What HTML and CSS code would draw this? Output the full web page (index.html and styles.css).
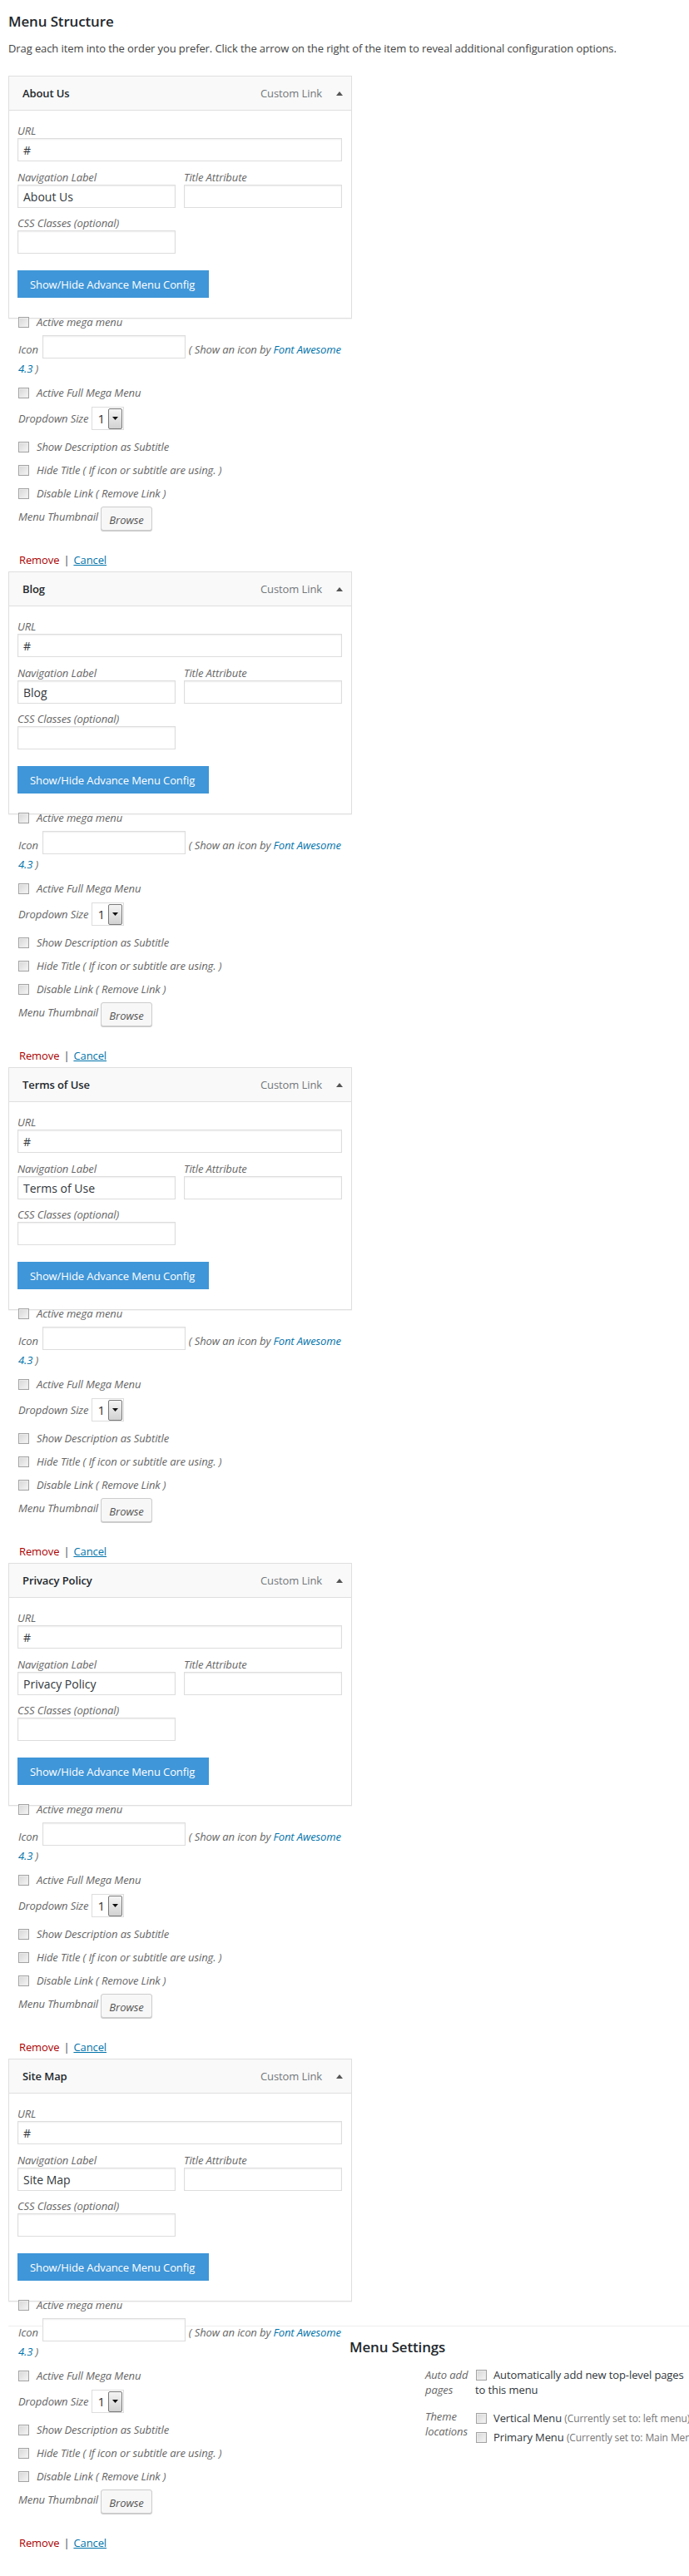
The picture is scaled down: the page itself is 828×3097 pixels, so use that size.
FILE: index.html
```html
<!DOCTYPE html>
<html lang="en">
<head>
<meta charset="utf-8">
<title>Menu Structure</title>
<link rel="stylesheet" href="styles.css">
</head>
<body>
<div class="page">
  <h3 class="page-title">Menu Structure</h3>
  <p class="intro">Drag each item into the order you prefer. Click the arrow on the right of the item to reveal additional configuration options.</p>

  <div class="menu-list">

    <!-- About Us -->
    <div class="menu-item">
      <div class="item-box">
        <div class="item-bar"><span class="item-title">About Us</span><span class="item-type">Custom Link</span><svg class="item-arrow" viewBox="0 0 8 5"><polygon points="0,5 4,0 8,5"/></svg></div>
        <div class="item-settings">
          <label class="field-label">URL</label>
          <input class="text-input" type="text" value="#">
          <div class="field-row">
            <div class="field-col"><label class="field-label">Navigation Label</label><input class="text-input" type="text" value="About Us"></div>
            <div class="field-col"><label class="field-label">Title Attribute</label><input class="text-input" type="text" value=""></div>
          </div>
          <div class="field-half"><label class="field-label">CSS Classes (optional)</label><input class="text-input" type="text" value=""></div>
          <button class="advance-btn" type="button">Show/Hide Advance Menu Config</button>
        </div>
      </div>
      <div class="advanced">
        <div class="check-row"><input class="cb" type="checkbox"><span>Active mega menu</span></div>
        <div class="icon-row">Icon<input class="icon-input" type="text"><span class="icon-note">( Show an icon by </span><a class="fa-link" href="#">Font Awesome 4.3</a><span class="icon-note"> )</span></div>
        <div class="check-row full-mega"><input class="cb" type="checkbox"><span>Active Full Mega Menu</span></div>
        <div class="dropdown-row"><span class="row-label">Dropdown Size</span><div class="fake-select"><span class="sel-val">1</span><span class="sel-btn"><svg viewBox="0 0 7 4"><polygon points="0,0 7,0 3.5,4"/></svg></span></div></div>
        <div class="check-row desc-row"><input class="cb" type="checkbox"><span>Show Description as Subtitle</span></div>
        <div class="check-row next-row"><input class="cb" type="checkbox"><span>Hide Title ( If icon or subtitle are using. )</span></div>
        <div class="check-row next-row"><input class="cb" type="checkbox"><span>Disable Link ( Remove Link )</span></div>
        <div class="thumb-row"><span class="row-label thumb-label">Menu Thumbnail</span><button class="browse-btn" type="button">Browse</button></div>
        <div class="actions"><a class="remove" href="#">Remove</a><span class="sep">|</span><a class="cancel" href="#">Cancel</a></div>
      </div>
    </div>

    <!-- Blog -->
    <div class="menu-item">
      <div class="item-box">
        <div class="item-bar"><span class="item-title">Blog</span><span class="item-type">Custom Link</span><svg class="item-arrow" viewBox="0 0 8 5"><polygon points="0,5 4,0 8,5"/></svg></div>
        <div class="item-settings">
          <label class="field-label">URL</label>
          <input class="text-input" type="text" value="#">
          <div class="field-row">
            <div class="field-col"><label class="field-label">Navigation Label</label><input class="text-input" type="text" value="Blog"></div>
            <div class="field-col"><label class="field-label">Title Attribute</label><input class="text-input" type="text" value=""></div>
          </div>
          <div class="field-half"><label class="field-label">CSS Classes (optional)</label><input class="text-input" type="text" value=""></div>
          <button class="advance-btn" type="button">Show/Hide Advance Menu Config</button>
        </div>
      </div>
      <div class="advanced">
        <div class="check-row"><input class="cb" type="checkbox"><span>Active mega menu</span></div>
        <div class="icon-row">Icon<input class="icon-input" type="text"><span class="icon-note">( Show an icon by </span><a class="fa-link" href="#">Font Awesome 4.3</a><span class="icon-note"> )</span></div>
        <div class="check-row full-mega"><input class="cb" type="checkbox"><span>Active Full Mega Menu</span></div>
        <div class="dropdown-row"><span class="row-label">Dropdown Size</span><div class="fake-select"><span class="sel-val">1</span><span class="sel-btn"><svg viewBox="0 0 7 4"><polygon points="0,0 7,0 3.5,4"/></svg></span></div></div>
        <div class="check-row desc-row"><input class="cb" type="checkbox"><span>Show Description as Subtitle</span></div>
        <div class="check-row next-row"><input class="cb" type="checkbox"><span>Hide Title ( If icon or subtitle are using. )</span></div>
        <div class="check-row next-row"><input class="cb" type="checkbox"><span>Disable Link ( Remove Link )</span></div>
        <div class="thumb-row"><span class="row-label thumb-label">Menu Thumbnail</span><button class="browse-btn" type="button">Browse</button></div>
        <div class="actions"><a class="remove" href="#">Remove</a><span class="sep">|</span><a class="cancel" href="#">Cancel</a></div>
      </div>
    </div>

    <!-- Terms of Use -->
    <div class="menu-item">
      <div class="item-box">
        <div class="item-bar"><span class="item-title">Terms of Use</span><span class="item-type">Custom Link</span><svg class="item-arrow" viewBox="0 0 8 5"><polygon points="0,5 4,0 8,5"/></svg></div>
        <div class="item-settings">
          <label class="field-label">URL</label>
          <input class="text-input" type="text" value="#">
          <div class="field-row">
            <div class="field-col"><label class="field-label">Navigation Label</label><input class="text-input" type="text" value="Terms of Use"></div>
            <div class="field-col"><label class="field-label">Title Attribute</label><input class="text-input" type="text" value=""></div>
          </div>
          <div class="field-half"><label class="field-label">CSS Classes (optional)</label><input class="text-input" type="text" value=""></div>
          <button class="advance-btn" type="button">Show/Hide Advance Menu Config</button>
        </div>
      </div>
      <div class="advanced">
        <div class="check-row"><input class="cb" type="checkbox"><span>Active mega menu</span></div>
        <div class="icon-row">Icon<input class="icon-input" type="text"><span class="icon-note">( Show an icon by </span><a class="fa-link" href="#">Font Awesome 4.3</a><span class="icon-note"> )</span></div>
        <div class="check-row full-mega"><input class="cb" type="checkbox"><span>Active Full Mega Menu</span></div>
        <div class="dropdown-row"><span class="row-label">Dropdown Size</span><div class="fake-select"><span class="sel-val">1</span><span class="sel-btn"><svg viewBox="0 0 7 4"><polygon points="0,0 7,0 3.5,4"/></svg></span></div></div>
        <div class="check-row desc-row"><input class="cb" type="checkbox"><span>Show Description as Subtitle</span></div>
        <div class="check-row next-row"><input class="cb" type="checkbox"><span>Hide Title ( If icon or subtitle are using. )</span></div>
        <div class="check-row next-row"><input class="cb" type="checkbox"><span>Disable Link ( Remove Link )</span></div>
        <div class="thumb-row"><span class="row-label thumb-label">Menu Thumbnail</span><button class="browse-btn" type="button">Browse</button></div>
        <div class="actions"><a class="remove" href="#">Remove</a><span class="sep">|</span><a class="cancel" href="#">Cancel</a></div>
      </div>
    </div>

    <!-- Privacy Policy -->
    <div class="menu-item">
      <div class="item-box">
        <div class="item-bar"><span class="item-title">Privacy Policy</span><span class="item-type">Custom Link</span><svg class="item-arrow" viewBox="0 0 8 5"><polygon points="0,5 4,0 8,5"/></svg></div>
        <div class="item-settings">
          <label class="field-label">URL</label>
          <input class="text-input" type="text" value="#">
          <div class="field-row">
            <div class="field-col"><label class="field-label">Navigation Label</label><input class="text-input" type="text" value="Privacy Policy"></div>
            <div class="field-col"><label class="field-label">Title Attribute</label><input class="text-input" type="text" value=""></div>
          </div>
          <div class="field-half"><label class="field-label">CSS Classes (optional)</label><input class="text-input" type="text" value=""></div>
          <button class="advance-btn" type="button">Show/Hide Advance Menu Config</button>
        </div>
      </div>
      <div class="advanced">
        <div class="check-row"><input class="cb" type="checkbox"><span>Active mega menu</span></div>
        <div class="icon-row">Icon<input class="icon-input" type="text"><span class="icon-note">( Show an icon by </span><a class="fa-link" href="#">Font Awesome 4.3</a><span class="icon-note"> )</span></div>
        <div class="check-row full-mega"><input class="cb" type="checkbox"><span>Active Full Mega Menu</span></div>
        <div class="dropdown-row"><span class="row-label">Dropdown Size</span><div class="fake-select"><span class="sel-val">1</span><span class="sel-btn"><svg viewBox="0 0 7 4"><polygon points="0,0 7,0 3.5,4"/></svg></span></div></div>
        <div class="check-row desc-row"><input class="cb" type="checkbox"><span>Show Description as Subtitle</span></div>
        <div class="check-row next-row"><input class="cb" type="checkbox"><span>Hide Title ( If icon or subtitle are using. )</span></div>
        <div class="check-row next-row"><input class="cb" type="checkbox"><span>Disable Link ( Remove Link )</span></div>
        <div class="thumb-row"><span class="row-label thumb-label">Menu Thumbnail</span><button class="browse-btn" type="button">Browse</button></div>
        <div class="actions"><a class="remove" href="#">Remove</a><span class="sep">|</span><a class="cancel" href="#">Cancel</a></div>
      </div>
    </div>

    <!-- Site Map -->
    <div class="menu-item last">
      <div class="item-box">
        <div class="item-bar"><span class="item-title">Site Map</span><span class="item-type">Custom Link</span><svg class="item-arrow" viewBox="0 0 8 5"><polygon points="0,5 4,0 8,5"/></svg></div>
        <div class="item-settings">
          <label class="field-label">URL</label>
          <input class="text-input" type="text" value="#">
          <div class="field-row">
            <div class="field-col"><label class="field-label">Navigation Label</label><input class="text-input" type="text" value="Site Map"></div>
            <div class="field-col"><label class="field-label">Title Attribute</label><input class="text-input" type="text" value=""></div>
          </div>
          <div class="field-half"><label class="field-label">CSS Classes (optional)</label><input class="text-input" type="text" value=""></div>
          <button class="advance-btn" type="button">Show/Hide Advance Menu Config</button>
        </div>
      </div>
      <div class="advanced floating">
        <div class="check-row"><input class="cb" type="checkbox"><span>Active mega menu</span></div>
        <div class="icon-row">Icon<input class="icon-input" type="text"><span class="icon-note">( Show an icon by </span><a class="fa-link" href="#">Font Awesome 4.3</a><span class="icon-note"> )</span></div>
        <div class="check-row full-mega"><input class="cb" type="checkbox"><span>Active Full Mega Menu</span></div>
        <div class="dropdown-row"><span class="row-label">Dropdown Size</span><div class="fake-select"><span class="sel-val">1</span><span class="sel-btn"><svg viewBox="0 0 7 4"><polygon points="0,0 7,0 3.5,4"/></svg></span></div></div>
        <div class="check-row desc-row"><input class="cb" type="checkbox"><span>Show Description as Subtitle</span></div>
        <div class="check-row next-row"><input class="cb" type="checkbox"><span>Hide Title ( If icon or subtitle are using. )</span></div>
        <div class="check-row next-row"><input class="cb" type="checkbox"><span>Disable Link ( Remove Link )</span></div>
        <div class="thumb-row"><span class="row-label thumb-label">Menu Thumbnail</span><button class="browse-btn" type="button">Browse</button></div>
        <div class="actions"><a class="remove" href="#">Remove</a><span class="sep">|</span><a class="cancel" href="#">Cancel</a></div>
      </div>
    </div>

  </div>

  <div class="menu-settings">
    <h3 class="settings-title">Menu Settings</h3>
    <div class="settings-group">
      <div class="group-name">Auto add pages</div>
      <div class="group-input"><input class="cb inline-cb" type="checkbox">Automatically add new top-level pages to this menu</div>
    </div>
    <div class="settings-group theme-group">
      <div class="group-name">Theme locations</div>
      <div class="group-input locations">
        <div class="location"><input class="cb inline-cb" type="checkbox">Vertical Menu <span class="loc-note">(Currently set to: left menu)</span></div>
        <div class="location"><input class="cb inline-cb" type="checkbox">Primary Menu <span class="loc-note">(Currently set to: Main Menu)</span></div>
      </div>
    </div>
  </div>
</div>
</body>
</html>
```

FILE: styles.css
```css
html {
  overflow: hidden;
}

body {
  margin: 0;
  font-family: "Open Sans", "Liberation Sans", sans-serif;
  font-size: 13px;
  letter-spacing: -0.1px;
  color: #444;
  background: #fff;
}

.page {
  padding-left: 10px;
}

.page-title {
  margin: 14px 0 0;
  font-size: 16.9px;
  line-height: 24px;
  font-weight: 600;
  color: #23282d;
}

.intro {
  margin: 11px 0 0;
  line-height: 18px;
  color: #444;
}

.menu-list {
  width: 413px;
  margin-top: 24px;
}

.menu-item {
  margin-bottom: 5px;
}

.menu-item.last {
  margin-bottom: 0;
}

/* ---------- item box ---------- */
.item-box {
  border: 1px solid #dfdfdf;
  background: #fff;
  box-shadow: 0 1px 1px rgba(0, 0, 0, 0.04);
}

.item-bar {
  display: flex;
  align-items: center;
  height: 40px;
  padding: 0 10px 0 16px;
  background: #f9f9f9;
  border-bottom: 1px solid #dfdfdf;
}

.item-title {
  flex: 1;
  font-weight: 600;
  color: #23282d;
}

.item-type {
  color: #72777c;
  margin-right: 17px;
}

.item-arrow {
  width: 8px;
  height: 5px;
  fill: #555;
}

.item-settings {
  padding: 15px 11px 24px 10px;
}

.field-label {
  display: block;
  font-style: italic;
  color: #666;
  line-height: 18px;
}

.text-input {
  display: block;
  width: 100%;
  height: 28px;
  box-sizing: border-box;
  margin: 0;
  padding: 0 6px;
  border: 1px solid #ddd;
  background: #fff;
  box-shadow: inset 0 1px 2px rgba(0, 0, 0, 0.07);
  font-family: "Open Sans", "Liberation Sans", sans-serif;
  font-size: 14px;
  color: #32373c;
}

.field-row {
  display: flex;
  gap: 10px;
  margin-top: 10px;
}

.field-col {
  flex: 1;
}

.field-half {
  width: 190px;
  margin-top: 9px;
}

.advance-btn {
  display: block;
  width: 230px;
  height: 33px;
  margin-top: 20px;
  padding: 0 0 0 15px;
  border: 0;
  background: #3f96d8;
  color: #fff;
  font-family: "Open Sans", "Liberation Sans", sans-serif;
  font-size: 13px;
  letter-spacing: -0.1px;
  white-space: nowrap;
  text-align: left;
}

/* ---------- advanced config (overflows the box) ---------- */
.advanced {
  margin-top: -6px;
  padding-left: 12px;
  font-style: italic;
  color: #666;
}

.advanced.floating {
  float: left;
  width: 398px;
}

.cb {
  -webkit-appearance: none;
  appearance: none;
  width: 13px;
  height: 13px;
  margin: 0;
  box-sizing: border-box;
  border: 1px solid #a3a3a3;
  background: linear-gradient(135deg, #d6d6d6, #f6f6f6);
  box-shadow: inset 0 0 0 1px #ececec;
  flex: none;
}

.check-row {
  display: flex;
  align-items: center;
  height: 20px;
}

.check-row .cb {
  margin-right: 9px;
}

.icon-row {
  margin-top: 6px;
  line-height: 23px;
}

.icon-input {
  width: 172px;
  height: 28px;
  box-sizing: border-box;
  margin: 0 4px 0 5px;
  padding: 0 6px;
  border: 1px solid #ddd;
  background: #fff;
  box-shadow: inset 0 1px 2px rgba(0, 0, 0, 0.07);
  font-family: "Open Sans", "Liberation Sans", sans-serif;
  font-size: 13px;
  line-height: normal;
  vertical-align: 3px;
}

.fa-link {
  color: #0073aa;
  text-decoration: none;
}

.full-mega {
  margin-top: 7px;
}

.dropdown-row {
  display: flex;
  align-items: center;
  height: 28px;
  margin-top: 7px;
}

.fake-select {
  display: flex;
  align-items: center;
  justify-content: space-between;
  width: 39px;
  height: 28px;
  box-sizing: border-box;
  margin-left: 4px;
  padding: 0 1px 0 6px;
  border: 1px solid #ddd;
  background: #fff;
  font-style: normal;
  font-size: 15px;
  color: #333;
}

.sel-btn {
  display: flex;
  align-items: center;
  justify-content: center;
  width: 17px;
  height: 25px;
  box-sizing: border-box;
  border: 1px solid #7a7a7a;
  border-radius: 2px;
  background: linear-gradient(#f4f4f4, #d2d2d2);
}

.sel-btn svg {
  width: 7px;
  height: 4px;
  fill: #111;
}

.desc-row {
  margin-top: 10px;
}

.next-row {
  margin-top: 8px;
}

.thumb-row {
  display: flex;
  align-items: flex-start;
  height: 29px;
  margin-top: 6px;
}

.thumb-label {
  line-height: 18px;
  margin-top: 3px;
}

.browse-btn {
  width: 62px;
  height: 29px;
  margin-left: 3px;
  padding: 2px 0 0;
  border: 1px solid #ccc;
  border-radius: 3px;
  background: #f7f7f7;
  box-shadow: 0 1px 0 #ccc;
  font-family: "Open Sans", "Liberation Sans", sans-serif;
  font-style: italic;
  font-size: 13px;
  color: #555;
}

.actions {
  margin-top: 26px;
  line-height: 18px;
  font-style: normal;
  padding-left: 1px;
}

.remove {
  color: #a00;
  text-decoration: none;
}

.sep {
  margin: 0 5px;
  color: #444;
}

.cancel {
  color: #0073aa;
  text-decoration: underline;
}

/* ---------- menu settings ---------- */
.menu-settings {
  margin-top: 29px;
  border-top: 1px solid #eee;
}

.settings-title {
  margin: 13px 0 0;
  font-size: 16.9px;
  line-height: 24px;
  font-weight: 600;
  color: #23282d;
}

.settings-group {
  display: flex;
  margin-top: 12px;
  padding-left: 91px;
}

.theme-group {
  margin-top: 14px;
}

.group-name {
  width: 60px;
  flex: none;
  font-style: italic;
  color: #666;
  line-height: 18px;
}

.group-input {
  width: 256px;
  flex: none;
  line-height: 18px;
  color: #32373c;
}

.inline-cb {
  margin: 0 8px 0 1px;
  vertical-align: -2px;
}

.locations {
  line-height: 22px;
}

.location {
  white-space: nowrap;
}

.loc-note {
  font-size: 12px;
  color: #777;
}
```
